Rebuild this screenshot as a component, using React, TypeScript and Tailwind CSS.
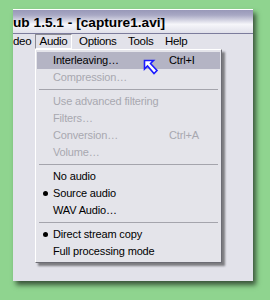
import { Fragment } from "react";

type Item =
  | { sep: true }
  | {
      sep?: false;
      label: string;
      shortcut?: string;
      disabled?: boolean;
      bullet?: boolean;
      active?: boolean;
    };

const items: Item[] = [
  { label: "Interleaving…", shortcut: "Ctrl+I", active: true },
  { label: "Compression…", disabled: true },
  { sep: true },
  { label: "Use advanced filtering", disabled: true },
  { label: "Filters…", disabled: true },
  { label: "Conversion…", shortcut: "Ctrl+A", disabled: true },
  { label: "Volume…", disabled: true },
  { sep: true },
  { label: "No audio" },
  { label: "Source audio", bullet: true },
  { label: "WAV Audio…" },
  { sep: true },
  { label: "Direct stream copy", bullet: true },
  { label: "Full processing mode" },
];

function Cursor() {
  return (
    <svg
      width="16"
      height="17"
      viewBox="0 0 16 17"
      className="absolute left-[107px] top-[9px]"
    >
      <polygon
        points="1.5,1.5 1.5,10 4.5,7 11,14.5 14,11.5 7.5,4.5 10.5,1.5"
        fill="#ffffff"
        stroke="#1a1aff"
        strokeWidth="1.6"
        strokeLinejoin="miter"
      />
    </svg>
  );
}

export default function App() {
  return (
    <div
      className="w-[270px] h-[300px] bg-[#8fd48f] pt-[9px] pl-[13px] overflow-hidden"
      style={{ fontFamily: '"Liberation Sans", Arial, sans-serif' }}
    >
      <div className="relative w-[240px] h-[272px] bg-[#e2e2ea] shadow-[3px_4px_5px_rgba(0,0,0,0.6)]">
        {/* TITLE BAR */}
        <div className="h-[25px] border-t border-white bg-[linear-gradient(to_bottom,#9898b8_0%,#a8a8c4_22%,#f6f6fa_62%,#e0e0ea_100%)] border-b border-b-[#7c7c9c] flex items-center overflow-hidden">
          <span className="text-[13.7px] font-bold text-black whitespace-nowrap leading-none pt-[3px]">
            ub 1.5.1 - [capture1.avi]
          </span>
        </div>

        {/* MENU BAR */}
        <div className="h-[15px] flex items-stretch text-[11.5px] tracking-[-0.3px] text-black leading-none">
          <span className="w-[22px] flex items-center">deo</span>
          <span className="w-[37px] flex items-center justify-center border-t border-l border-[#8c8c94] border-b border-r border-b-white border-r-white">
            Audio
          </span>
          <span className="w-[49px] pl-[7px] flex items-center">Options</span>
          <span className="w-[37px] pl-[7px] flex items-center">Tools</span>
          <span className="pl-[7px] flex items-center">Help</span>
        </div>

        {/* AUDIO MENU */}
        <div className="absolute left-[22px] top-[40px] w-[187px] bg-[#e4e4ea] border-t border-l border-white border-r border-b border-r-[#6c6c74] border-b-[#6c6c74] shadow-[3px_3px_2px_rgba(0,0,0,0.45)] pt-[2px] pb-[2px] px-[1px] text-[11px] tracking-[-0.15px] leading-none">
          {items.map((item, i) => (
            <Fragment key={i}>
              {item.sep ? (
                <div className="h-[7px] flex items-center px-[2px]">
                  <div className="h-px w-full bg-[#a4a4ac]" />
                </div>
              ) : (
                <div
                  className={
                    "relative h-[17px] flex items-center pl-[16px] pr-2 " +
                    (item.active ? "bg-[#b4b4c4] " : "") +
                    (item.disabled ? "text-[#a8a8b0]" : "text-black")
                  }
                >
                  {item.bullet && (
                    <span className="absolute left-[6px] top-[6px] w-[5px] h-[5px] rounded-full bg-black" />
                  )}
                  <span className="whitespace-nowrap">{item.label}</span>
                  {item.shortcut && (
                    <span className="absolute left-[132px] whitespace-nowrap">
                      {item.shortcut}
                    </span>
                  )}
                </div>
              )}
            </Fragment>
          ))}
          <Cursor />
        </div>
      </div>
    </div>
  );
}
